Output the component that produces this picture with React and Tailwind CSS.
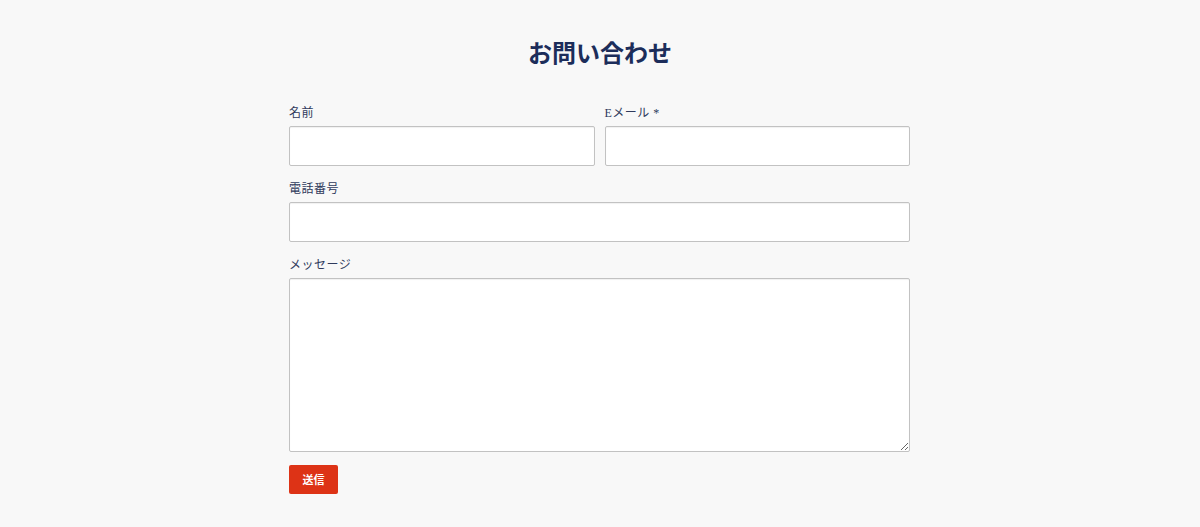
export default function App()
{
    const labelCls = "block text-[12px] leading-[16px] mb-[5px] text-[#2f3a5c] tracking-[0.5px]";
    const inputCls = "block w-full h-[40px] bg-white border border-[#c2c2c2] rounded-[2px] shadow-[inset_0_1px_1px_rgba(0,0,0,0.06)] outline-none";
    return(
        <div className="w-full min-h-[527px] bg-[#f8f8f8] flex flex-col items-center pt-[36px]" style={{fontFamily: '"Liberation Serif", "Noto Sans CJK JP", serif'}}>
            <h1 className="text-[24px] leading-[32px] font-bold text-[#1c2d5a]" style={{fontFamily: '"Noto Sans CJK JP", sans-serif'}}>お問い合わせ</h1>
            <form className="w-[621px] mr-[1px] mt-[37px] flex flex-col">
                <div className="flex gap-[10px]">
                    <div className="flex-1">
                        <label className={labelCls}>名前</label>
                        <input className={inputCls} type="text"/>
                    </div>
                    <div className="flex-1">
                        <label className={labelCls}>Eメール *</label>
                        <input className={inputCls} type="email"/>
                    </div>
                </div>
                <div className="mt-[15px]">
                    <label className={labelCls}>電話番号</label>
                    <input className={inputCls} type="tel"/>
                </div>
                <div className="mt-[15px]">
                    <label className={labelCls}>メッセージ</label>
                    <textarea className="block w-full h-[174px] bg-white border border-[#c2c2c2] rounded-[2px] shadow-[inset_0_1px_1px_rgba(0,0,0,0.06)] outline-none resize-y"></textarea>
                </div>
                <div className="mt-[13px]">
                    <button type="button" className="w-[49px] h-[29px] bg-[#dd3316] text-white text-[11px] font-bold rounded-[2px]" style={{fontFamily: '"Noto Sans CJK JP", sans-serif'}}>送信</button>
                </div>
            </form>
        </div>
    )
}
